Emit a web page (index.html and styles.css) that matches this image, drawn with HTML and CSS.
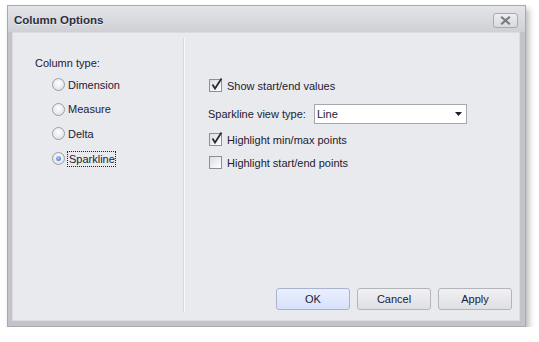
FILE: index.html
```html
<!DOCTYPE html>
<html lang="en">
<head>
  <meta charset="UTF-8">
  <title>Column Options</title>
  <link rel="stylesheet" href="styles.css">
</head>
<body>
  <div class="window">
    <div class="titlebar">
      <span class="title">Column Options</span>
      <button class="close-btn" aria-label="Close">
        <svg width="11" height="9" viewBox="0 0 11 9"><path d="M2 1.5 L9 7.5 M9 1.5 L2 7.5" stroke="#7b7c82" stroke-width="2.2" stroke-linecap="square"/></svg>
      </button>
    </div>

    <div class="content">
      <div class="left-pane">
        <div class="group-label">Column type:</div>
        <div class="radio-list">
          <label class="radio-row"><span class="radio"></span><span>Dimension</span></label>
          <label class="radio-row"><span class="radio"></span><span>Measure</span></label>
          <label class="radio-row"><span class="radio"></span><span>Delta</span></label>
          <label class="radio-row"><span class="radio checked"></span><span class="focused">Sparkline</span></label>
        </div>
      </div>

      <div class="right-pane">
        <div class="options">
          <label class="check-row">
            <span class="checkbox"><svg width="13" height="13" viewBox="0 0 13 13"><path d="M2.5 6.5 L5 10.5 L11.5 0.5" fill="none" stroke="#2b2c35" stroke-width="1.8"/></svg></span>
            <span>Show start/end values</span>
          </label>
          <div class="combo-row">
            <span class="combo-label">Sparkline view type:</span>
            <div class="combo">
              <span>Line</span>
              <svg width="7" height="4" viewBox="0 0 7 4"><path d="M0 0 H7 L3.5 4 Z" fill="#1f1f2a"/></svg>
            </div>
          </div>
          <label class="check-row">
            <span class="checkbox"><svg width="13" height="13" viewBox="0 0 13 13"><path d="M2.5 6.5 L5 10.5 L11.5 0.5" fill="none" stroke="#2b2c35" stroke-width="1.8"/></svg></span>
            <span>Highlight min/max points</span>
          </label>
          <label class="check-row">
            <span class="checkbox"></span>
            <span>Highlight start/end points</span>
          </label>
        </div>

        <div class="buttons">
          <button class="btn btn-default">OK</button>
          <button class="btn">Cancel</button>
          <button class="btn">Apply</button>
        </div>
      </div>
    </div>
  </div>
</body>
</html>
```

FILE: styles.css
```css
:root {
  --frame: #c3c4ca;
  --frame-dark: #a9aab1;
  --panel: #e9eaee;
  --text: #1d2030;
}

body {
  margin: 0;
  background-color: #fff;
  font-family: Tahoma, "Liberation Sans", Arial, sans-serif;
  font-size: 11px;
  color: var(--text);
}

.window {
  margin: 5px 0 0 7px;
  width: 517px;
  height: 320px;
  border: 1px solid var(--frame-dark);
  background-color: var(--frame);
  box-shadow: 3px 4px 6px rgba(0, 0, 0, 0.28);
  display: flex;
  flex-direction: column;
}

.titlebar {
  height: 26px;
  background: linear-gradient(#e4e5e9, #cfd0d5);
  display: flex;
  align-items: center;
  justify-content: space-between;
  padding: 0 7px 0 6px;
}

.title {
  font-weight: bold;
  font-size: 11.5px;
  color: #2c2f3e;
  text-shadow: 0 1px 0 rgba(255, 255, 255, 0.6);
  margin-top: 1px;
}

.close-btn {
  width: 25px;
  height: 15px;
  margin-top: 2px;
  border: 1px solid #a9aab0;
  border-radius: 3px;
  background: linear-gradient(#eeeef1, #d8d9de);
  display: flex;
  align-items: center;
  justify-content: center;
  padding: 0;
}

.content {
  flex: 1;
  margin: 0 5px 5px 4px;
  border: 1px solid #dadbe0;
  background-color: var(--panel);
  display: flex;
}

.left-pane {
  width: 170px;
  margin: 5px 0 8px;
  border-right: 1px solid #d7d8dd;
  box-shadow: 1px 0 0 #f8f8fa;
}

.group-label {
  margin: 18px 0 0 22px;
  line-height: 14px;
}

.radio-list {
  display: flex;
  flex-direction: column;
  gap: 7.7px;
  margin: 6px 0 0 39px;
}

.radio-row {
  display: flex;
  align-items: center;
  gap: 3px;
  height: 17px;
}

.radio {
  width: 11px;
  height: 11px;
  border-radius: 50%;
  border: 1px solid #9d9ea4;
  background: radial-gradient(circle at 50% 40%, #ffffff, #d9dade);
  display: flex;
  align-items: center;
  justify-content: center;
}

.radio.checked::after {
  content: "";
  width: 5px;
  height: 5px;
  border-radius: 50%;
  background: radial-gradient(circle at 40% 35%, #a9c8f4, #3b6fc8);
}

.focused {
  outline: 1px dotted #1d2030;
  padding: 1px 0 1px 1px;
}

.right-pane {
  flex: 1;
  display: flex;
  flex-direction: column;
  justify-content: space-between;
  padding: 0 7px 10px 25px;
}

.options {
  display: flex;
  flex-direction: column;
  margin-top: 44px;
}

.check-row {
  display: flex;
  align-items: center;
  gap: 5px;
  height: 17px;
}

.checkbox {
  width: 11px;
  height: 11px;
  border: 1px solid #8f9096;
  background: linear-gradient(135deg, #dcdde2, #ffffff);
  position: relative;
}

.checkbox svg {
  position: absolute;
  left: 0;
  top: -2px;
}

.combo-row {
  display: flex;
  align-items: center;
  margin: 10px 0 7px -1px;
}

.combo-label {
  width: 106px;
}

.combo {
  width: 145px;
  height: 18px;
  border: 1px solid #a7a8ae;
  background-color: #fff;
  display: flex;
  align-items: center;
  justify-content: space-between;
  padding: 0 4px 0 2px;
}

.check-row + .check-row {
  margin-top: 6px;
}

.buttons {
  display: flex;
  justify-content: flex-end;
  gap: 7px;
}

.btn {
  width: 74px;
  height: 22px;
  border: 1px solid #b4b5bb;
  border-radius: 3px;
  background: linear-gradient(#f1f1f4, #dfe0e4);
  font-family: Tahoma, "Liberation Sans", Arial, sans-serif;
  font-size: 11px;
  color: var(--text);
}

.btn-default {
  background: linear-gradient(#e9effe, #d7e1fa);
  border-color: #a9b3cf;
}
```
